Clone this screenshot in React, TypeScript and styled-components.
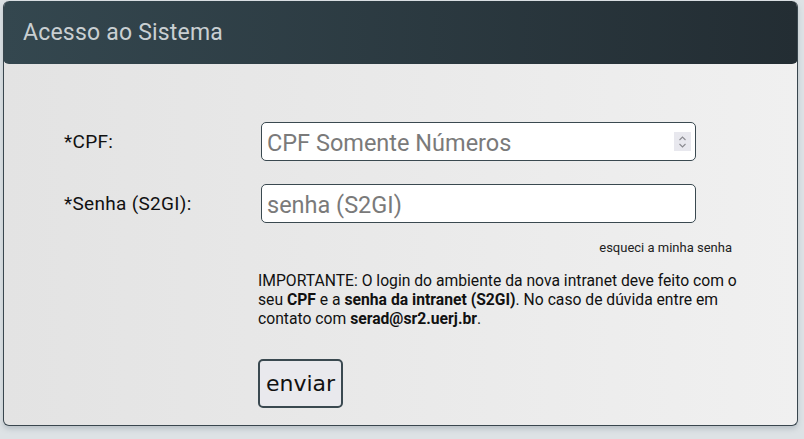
import React from 'react'
import styled, { createGlobalStyle } from 'styled-components'

const GlobalStyle = createGlobalStyle`
  html, body {
    margin: 0;
    padding: 0;
    background: #dde2e5;
    font-family: Roboto, "Noto Sans", sans-serif;
  }
`

export default function App() {
  return (
    <>
      <GlobalStyle />
      <Page>
        <Card>
          <CardHeader>Acesso ao Sistema</CardHeader>
          <CardBody>
            <Form onSubmit={(e) => e.preventDefault()}>
              <Label htmlFor="cpf">*CPF:</Label>
              <Field>
                <Input id="cpf" type="text" inputMode="numeric" placeholder="CPF Somente Números" />
                <Spinner aria-hidden="true">
                  <svg width="9" height="14" viewBox="0 0 9 14">
                    <path d="M1.5 5 L4.5 2 L7.5 5" fill="none" stroke="#8a8a90" strokeWidth="1.1" />
                    <path d="M1.5 9 L4.5 12 L7.5 9" fill="none" stroke="#8a8a90" strokeWidth="1.1" />
                  </svg>
                </Spinner>
              </Field>
              <Label htmlFor="senha" $top={23}>*Senha (S2GI):</Label>
              <Field $top={23}>
                <Input id="senha" type="password" placeholder="senha (S2GI)" />
              </Field>
              <Forgot href="#">esqueci a minha senha</Forgot>
              <Info>
                IMPORTANTE: O login do ambiente da nova intranet deve feito com o
                seu <b>CPF</b> e a <b>senha da intranet (S2GI)</b>. No caso de dúvida entre em
                contato com <b>serad@sr2.uerj.br</b>.
              </Info>
              <SubmitButton type="submit">enviar</SubmitButton>
            </Form>
          </CardBody>
        </Card>
      </Page>
    </>
  )
}

const Page = styled.div`
  padding: 1px 8px 0 3px;
  height: 439px;
  box-sizing: border-box;
`

const Card = styled.div`
  width: 793px;
  border: 1px solid #39464e;
  border-top: none;
  border-radius: 6px;
  background: linear-gradient(to right, #e3e3e3, #f0f0f0);
  box-shadow: 0 3px 5px rgba(120, 135, 145, 0.35);
  overflow: hidden;
`

const CardHeader = styled.div`
  height: 63px;
  margin: 0 -1px;
  padding: 0 20px;
  display: flex;
  align-items: center;
  border-radius: 6px;
  background: linear-gradient(to right, #34474f, #232d33);
  color: #c9cfd2;
  font-size: 23px;
  letter-spacing: 0.2px;
`

const CardBody = styled.div`
  padding: 58px 0 17px 60px;
`

const Form = styled.form`
  display: grid;
  grid-template-columns: 197px 435px;
  align-items: center;
`

const Label = styled.label<{ $top?: number }>`
  margin-top: ${(p) => p.$top ?? 0}px;
  font-size: 19px;
  letter-spacing: 0.3px;
  color: #111;
`

const Field = styled.div<{ $top?: number }>`
  position: relative;
  margin-top: ${(p) => p.$top ?? 0}px;
`

const Input = styled.input`
  box-sizing: border-box;
  width: 435px;
  height: 39px;
  padding: 2px 6px 0 5px;
  border: 1px solid #3a4950;
  border-radius: 5px;
  background: #fff;
  font-family: Roboto, "Noto Sans", sans-serif;
  font-size: 23.5px;
  color: #222;
  outline: none;

  &::placeholder {
    color: #7a7a7a;
  }
`

const Spinner = styled.span`
  position: absolute;
  top: 10px;
  right: 5px;
  width: 17px;
  height: 19px;
  display: flex;
  align-items: center;
  justify-content: center;
  background: #e8e8ee;
`

const Forgot = styled.a`
  grid-column: 2;
  justify-self: end;
  margin: 17px -36px 0 0;
  font-size: 13px;
  line-height: 16px;
  color: #222;
  text-decoration: none;
`

const Info = styled.p`
  grid-column: 2;
  margin: 15px 0 0 -3px;
  width: 500px;
  font-size: 15.7px;
  line-height: 19px;
  color: #111;

  b {
    font-weight: 700;
  }
`

const SubmitButton = styled.button`
  grid-column: 2;
  justify-self: start;
  margin: 31px 0 0 -3px;
  width: 85px;
  height: 49px;
  border: 2px solid #3a4950;
  border-radius: 5px;
  background: #e9e9ed;
  font-family: "DejaVu Sans", Verdana, sans-serif;
  font-size: 22px;
  color: #111;
  cursor: pointer;
`
